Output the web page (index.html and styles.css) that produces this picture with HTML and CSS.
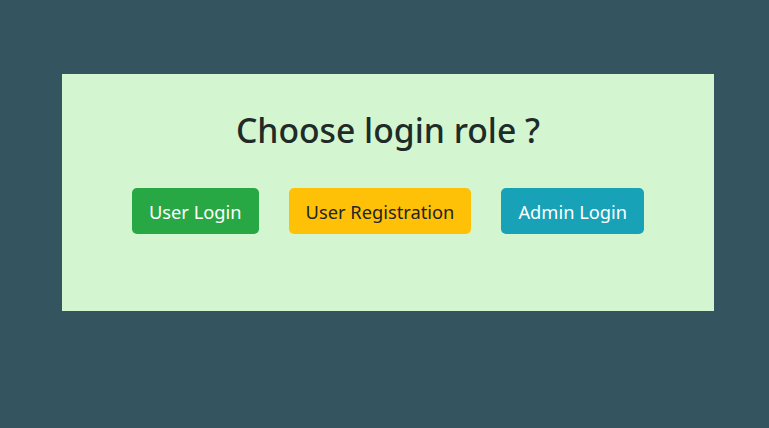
FILE: index.html
```html
<!DOCTYPE html>
<html>
<head>
<meta charset="utf-8">
<link rel="stylesheet" href="styles.css">
</head>
<body>
<div class="page">
  <div class="panel">
    <h1 class="title">Choose login role ?</h1>
    <div class="actions">
      <button class="btn btn-success">User Login</button>
      <button class="btn btn-warning">User Registration</button>
      <button class="btn btn-info">Admin Login</button>
    </div>
  </div>
</div>
</body>
</html>
```

FILE: styles.css
```css
html, body {
  margin: 0;
  padding: 0;
  height: 100%;
}
body {
  background: #34555f;
  font-family: "Noto Sans", "Open Sans", sans-serif;
}
.page {
  padding: 74px 55px 0 62px;
}
.panel {
  width: 652px;
  height: 237px;
  box-sizing: border-box;
  background: #d3f6d0;
  display: flex;
  flex-direction: column;
  align-items: center;
  padding-top: 34px;
}
.title {
  margin: 0;
  font-size: 33.7px;
  font-weight: 500;
  line-height: 44px;
  color: #1e2b28;
}
.actions {
  display: flex;
  gap: 30px;
  margin-top: 36px;
}
.btn {
  font-family: inherit;
  font-size: 18.3px;
  line-height: 28px;
  padding: 9px 16px 7px;
  border: 1px solid transparent;
  border-radius: 5px;
  cursor: pointer;
}
.btn-success {
  background: #28a745;
  color: #fff;
}
.btn-warning {
  background: #ffc107;
  color: #212529;
}
.btn-info {
  background: #17a2b8;
  color: #fff;
}
```
